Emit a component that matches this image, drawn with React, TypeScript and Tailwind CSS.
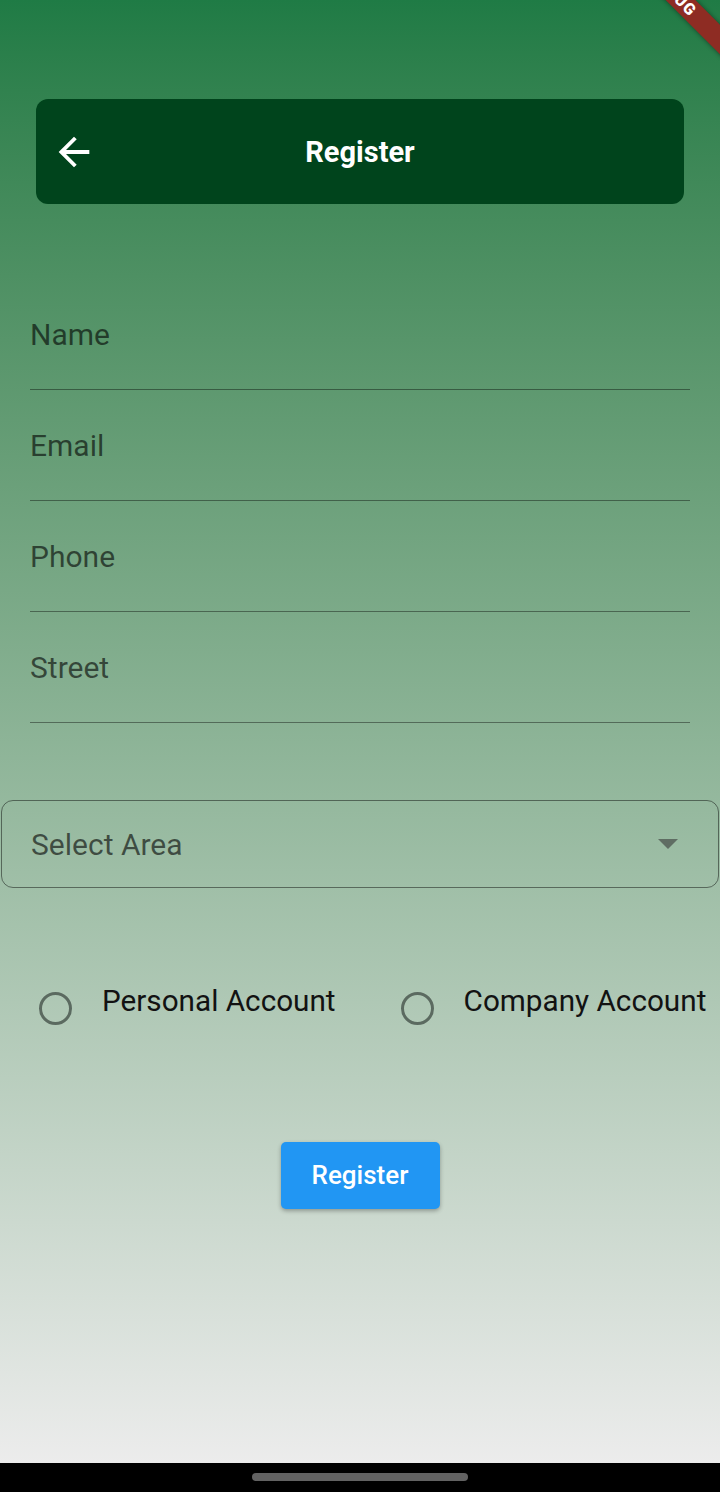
const fields = ["Name", "Email", "Phone", "Street"];

const BackArrow = () => (
  <svg viewBox="0 0 24 24" width={46} height={46} fill="white">
    <path d="M20 11H7.83l5.59-5.59L12 4l-8 8 8 8 1.41-1.41L7.83 13H20v-2z" />
  </svg>
);

const Radio = ({ label }: { label: string }) => (
  <div className="flex items-start">
    <div className="w-[33px] h-[33px] mt-[8px] rounded-full border-[3px] border-[#5b6a60]" />
    <span className="ml-[30px] text-[29.7px] leading-[34px] text-[#121212]">{label}</span>
  </div>
);

export default function App() {
  return (
    <div
      className="relative w-[720px] h-[1492px] overflow-hidden flex flex-col"
      style={{ fontFamily: "Roboto, 'Noto Sans', sans-serif" }}
    >
      <div className="flex-1 flex flex-col bg-linear-to-b from-[#1f7b45] to-[#ececec]">
        {/* app bar card */}
        <div className="relative mx-[36px] mt-[99px] h-[105px] rounded-[12px] bg-[#00441c] flex items-center justify-center">
          <div className="absolute left-[15px] top-[30px]">
            <BackArrow />
          </div>
          <h1 className="text-[29px] font-bold text-white mt-[2px]">Register</h1>
        </div>

        {/* text fields */}
        <div className="mt-[75px] px-[30px] flex flex-col">
          {fields.map((f) => (
            <div key={f} className="h-[111px] border-b-[1.5px] border-black/40 pt-[40px]">
              <span className="text-[30px] leading-[32px] text-black/60">{f}</span>
            </div>
          ))}
        </div>

        {/* dropdown */}
        <div className="mt-[77px] mx-[1px] h-[88px] rounded-[12px] border-[1.5px] border-black/45 flex items-center justify-between pl-[29px] pr-[40px]">
          <span className="text-[30px] text-black/60">Select Area</span>
          <svg width="20" height="10" viewBox="0 0 20 10">
            <path d="M0 0h20L10 10z" fill="#5f6d63" />
          </svg>
        </div>

        {/* account type */}
        <div className="mt-[96px] pl-[39px] flex gap-[65px]">
          <Radio label="Personal Account" />
          <Radio label="Company Account" />
        </div>

        <div className="mt-[117px] flex justify-center">
          <button className="w-[159px] h-[67px] rounded-[5px] bg-[#2196f3] text-white text-[26px] font-medium shadow-[0_2px_4px_rgba(0,0,0,0.3)]">
            Register
          </button>
        </div>
      </div>

      {/* system nav bar */}
      <div className="h-[29px] bg-black flex justify-center pt-[10px]">
        <div className="w-[216px] h-[8px] rounded-full bg-[#626262]" />
      </div>

      {/* debug banner */}
      <div className="absolute left-[594px] top-[-17px] w-[160px] h-[21px] rotate-45 bg-[#8e2c23] shadow-[0_0_5px_rgba(0,0,0,0.45)] flex items-center justify-center">
        <span className="text-[16px] leading-none font-black text-white tracking-[1px]">DEBUG</span>
      </div>
    </div>
  );
}
